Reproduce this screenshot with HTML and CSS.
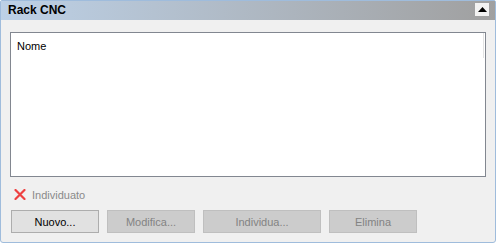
FILE: index.html
```html
<!DOCTYPE html>
<html lang="it">
<head>
    <meta charset="UTF-8">
    <title>Rack CNC</title>
    <link rel="stylesheet" href="styles.css">
</head>
<body>
    <div class="panel">
        <div class="header">
            <span class="title">Rack CNC</span>
            <span class="collapse">
                <svg width="9" height="5" viewBox="0 0 9 5"><polygon points="0,5 9,5 4.5,0" fill="#000"/></svg>
            </span>
        </div>
        <div class="body">
            <div class="list">
                <div class="col">Nome</div>
                <div class="colline"></div>
            </div>
            <div class="status">
                <svg class="xicon" width="12" height="11" viewBox="0 0 12 11">
                    <path d="M1.5 1 L10.5 10 M10.5 1 L1.5 10" stroke="#ee4040" stroke-width="2.2" stroke-linecap="round"/>
                </svg>
                <span>Individuato</span>
            </div>
            <div class="buttons">
                <div class="btn">Nuovo...</div>
                <div class="btn disabled">Modifica...</div>
                <div class="btn disabled wide">Individua...</div>
                <div class="btn disabled">Elimina</div>
            </div>
        </div>
    </div>
</body>
</html>
```

FILE: styles.css
```css
html,
body {
    margin: 0;
    padding: 0;
    background: #ffffff;
}

.panel {
    width: 496px;
    height: 243px;
    box-sizing: border-box;
    border: 1px solid #9fbcdc;
    border-radius: 2px 2px 3px 3px;
    background: #f0f0f0;
    font-family: "Liberation Sans", Arial, sans-serif;
    font-size: 11px;
    color: #000;
    display: flex;
    flex-direction: column;
}

.header {
    height: 19px;
    display: flex;
    align-items: center;
    justify-content: space-between;
    background: linear-gradient(to right, #bdd1e7, #a0a0a0);
    padding: 0 6px 0 7px;
}

.title {
    font-weight: bold;
    font-size: 12px;
    margin-top: -1px;
}

.collapse {
    width: 14px;
    height: 13px;
    background: #f2f2f2;
    display: flex;
    align-items: center;
    justify-content: center;
    margin-top: -3px;
}

.body {
    padding: 12px 9px 0 9px;
}

.list {
    width: 476px;
    height: 145px;
    box-sizing: border-box;
    border: 1px solid #828790;
    background: #ffffff;
    display: flex;
    justify-content: space-between;
    padding: 7px 1px 0 6px;
}

.colline {
    width: 1px;
    height: 25px;
    margin-top: -7px;
    background: #e3e3e3;
}

.status {
    height: 13px;
    margin-top: 11px;
    padding-left: 4px;
    display: flex;
    align-items: center;
    gap: 6px;
    color: #8a8a8a;
}

.buttons {
    display: flex;
    gap: 8px;
    margin-top: 9px;
    padding-left: 1px;
}

.btn {
    width: 88px;
    height: 23px;
    box-sizing: border-box;
    border: 1px solid #adadad;
    background: #e1e1e1;
    display: flex;
    align-items: center;
    justify-content: center;
    color: #000;
}

.btn.wide {
    width: 118px;
}

.btn.disabled {
    border-color: #bfbfbf;
    background: #cccccc;
    color: #838383;
}
```
